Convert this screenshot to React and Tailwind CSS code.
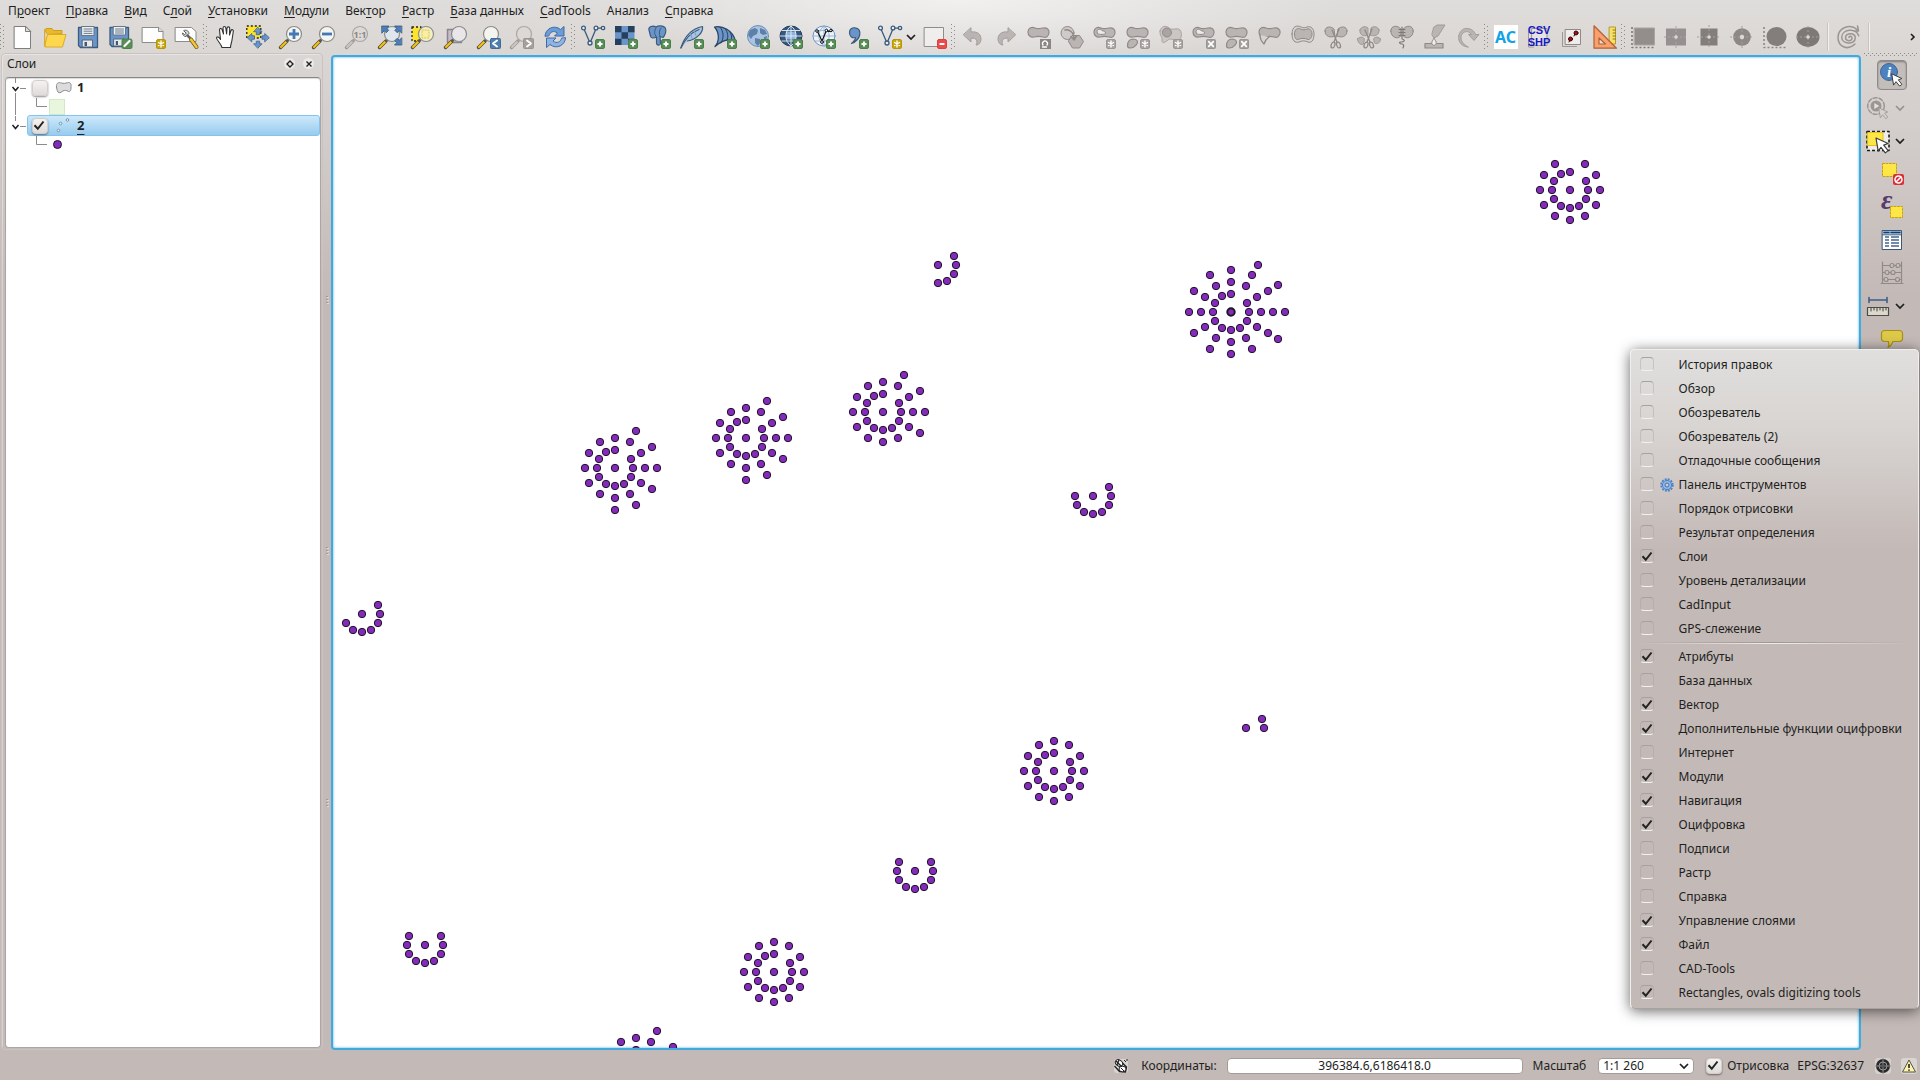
import React from "react";

const FONT = "font-['Noto_Sans','Open_Sans',sans-serif]";

/* ---------- shared icon pieces ---------- */

const BLUE = "#6b95c8";
const NAVY = "#3b5b7d";
const GREY = "#bab5b3";
const GLINE = "#8f8a88";

function Svg({ children, size = 24 }) {
  return (
    <svg width={size} height={size} viewBox="0 0 24 24" fill="none" strokeLinecap="round" strokeLinejoin="round" aria-hidden="true" className="block shrink-0 overflow-visible">
      {children}
    </svg>
  );
}

const PlusBadge = () => (
  <g>
    <rect x="14.5" y="14.5" width="9" height="9" rx="1.5" fill="#588f56" stroke="#4b7f4a" />
    <path d="M19 16.5v5M16.5 19h5" stroke="#fff" strokeWidth="2" strokeLinecap="butt" />
  </g>
);
const StarBadge = ({ x = 14.5, grey }) => (
  <g transform={`translate(${x} 14.5)`}>
    <rect width="9" height="9" rx="1.5" fill={grey ? "#aaa5a3" : "#c9a50c"} stroke={grey ? "#9b9694" : "#b8960a"} />
    <path d="M4.5 1.5v6M2 3l5 3M7 3l-5 3" stroke="#fff" strokeWidth="1.4" />
  </g>
);
const CrossBadge = () => (
  <g>
    <rect x="14.5" y="14.5" width="9" height="9" rx="1" fill="#a5a09e" stroke="#999492" />
    <path d="M16.7 16.7l4.6 4.6M21.3 16.7l-4.6 4.6" stroke="#fff" strokeWidth="1.7" />
  </g>
);
const Lens = ({ grey, cx = 15, fill = "#f4f4f1" }) => (
  <g>
    <path d="M1.5 22.5l6.5-6.5" stroke={grey ? "#9d9896" : "#5a5136"} strokeWidth="3.4" />
    <path d="M2 22l5-5" stroke={grey ? "#cbc6c3" : "#f8c40e"} strokeWidth="2" />
    <path d="M8 16l2.5-2.5" stroke={grey ? "#a5a09e" : "#555753"} strokeWidth="2" />
    <circle cx={cx} cy="9" r="7.5" fill={grey ? "#dcd8d5" : fill} stroke={grey ? "#aba6a3" : "#8b8d89"} strokeWidth="1.2" />
  </g>
);
const VLine = () => (
  <g stroke={NAVY} strokeWidth="1.3">
    <path d="M3.2 4.5L9 18l5.5-13M16.5 3.2h5" />
    <g fill="#e4ebf2">
      <circle cx="2.5" cy="3" r="1.9" />
      <circle cx="9" cy="18" r="2" />
      <circle cx="15" cy="3" r="1.9" />
      <circle cx="22" cy="3" r="1.7" />
    </g>
  </g>
);
const Bean = ({ d = "M1 7c0-4 3.500-5.500 7-4 3 1.300 5 .5 8 0 4-.6 6.500 1.500 6 5s-3 5-6 4c-3-.9-6-.8-9 0-3.500.7-6-1.500-6-5z", fill = GREY }) => (
  <path d={d} fill={fill} stroke={GLINE} strokeWidth="1.2" />
);
const SmallBean = () => <path d="M1.500 21c0-4 2-7 6-7 4 .2 5 3 3 5.500-2 2-2.500 3.500-6 3.500-2 0-3-.5-3-2z" fill={GREY} stroke={GLINE} strokeWidth="1.2" />;
const Scissors = () => (
  <g stroke={GLINE} strokeWidth="1.3">
    <path d="M8 5l5 12M15 4l-5 13" />
    <ellipse cx="9" cy="20" rx="1.800" ry="3" transform="rotate(20 9 20)" />
    <ellipse cx="14.500" cy="20" rx="1.800" ry="3" transform="rotate(-20 14.500 20)" />
  </g>
);
const Arrow = ({ grey, s = 1, x = 12, y = 10 }) => (
  <path transform={`translate(${x} ${y}) scale(${s})`} d="M0 0l11 5-4 1.500 4 5-2.500 2-4-5-2.500 3.500z" fill={grey ? "#d6d1ce" : "#fff"} stroke={grey ? "#a19c9a" : "#3c3c3c"} strokeWidth="1.1" />
);

/* ---------- toolbar icons ---------- */

const icons = {
  new: <Svg><path d="M4.500 1.500h11l5 5v17h-16z" fill="#fefefe" stroke="#7d7f7c" /><path d="M15.500 1.500v5h5z" fill="#ddd" stroke="#7d7f7c" /></Svg>,
  open: <Svg><path d="M2 5.500l1-2h6l1.500 2h8.500v3l-14 1z" fill="#e8b92e" stroke="#cf9f1c" /><path d="M1.500 5v16.500l3-12h18.500l-3.500 12.500h-17z" fill="#fdd84e" stroke="#dcab27" /></Svg>,
  save: <Svg><path d="M2.500 2.500h19v20h-17l-2-2z" fill={BLUE} stroke={NAVY} strokeWidth="1.3" /><path d="M6 1.500h12v9H6z" fill="#eef0f1" stroke="#64778b" /><path d="M8 4h8M8 6.200h8M8 8.400h8" stroke="#6b7b8c" /><path d="M6.500 15h10v7h-10z" fill="#e9e9e6" stroke="#55697f" /><path d="M8.500 17v4h2.500v-4z" fill={NAVY} /></Svg>,
  saveAs: <Svg><path d="M1 2.500h18.500v19h-16.500l-2-2z" fill={BLUE} stroke={NAVY} strokeWidth="1.3" /><path d="M4.500 1.500h12v8.500h-12z" fill="#eef0f1" stroke="#64778b" /><path d="M6.500 4h8M6.500 6h8M6.500 8h8" stroke="#6b7b8c" /><path d="M5 14h9v7H5z" fill="#e9e9e6" stroke="#55697f" /><path d="M6.800 16v4H9v-4z" fill={NAVY} /><rect x="13" y="14" width="10" height="9.500" rx="1.500" fill="#588f56" stroke="#4b7f4a" /><path d="M15.500 21l5-5" stroke="#fff" strokeWidth="2.200" /></Svg>,
  newPrint: <Svg><path d="M.5 2.500h16l4.500 4v11h-20.500z" fill="#fefefe" stroke="#8b8d89" /><path d="M16.500 2.500v4h4.500" fill="#ddd" stroke="#8b8d89" /><StarBadge /></Svg>,
  layoutMgr: <Svg><path d="M.5 2.500h16l4.500 4v10h-20.500z" fill="#fefefe" stroke="#8b8d89" /><path d="M9 5.500c2-1 4.500 0 5 3l-3 3c-2 0-3.500-1.500-3.500-3.500l2 1.500 1.500-1z" fill="#dadada" stroke="#5c5c5c" /><path d="M12.500 10.500l3 3" stroke="#666" strokeWidth="2.500" /><path d="M16 14.500l5.500 7.500" stroke="#6f5c20" strokeWidth="4" /><path d="M16 14.500l5.500 7.500" stroke="#f2c634" strokeWidth="2.500" /></Svg>,
  pan: <Svg><path transform="translate(2 0)" d="M7 22.500c-1-4-5-7-5.500-9.500.5-2 2.500-1 4 1.500L4.500 5c0-2.200 2.300-2 2.700 0L8.500 9 8 3c.2-2 2.600-2 2.800 0l.8 6L12 3.200c.4-1.900 2.600-1.700 2.700.2L14.500 10l1.500-4.500c.7-1.500 2.600-.8 2.300 1L17 15c-.5 3-1.500 5-1.500 7.500z" fill="#fff" stroke="#333" strokeWidth="1.1" /></Svg>,
  panSel: <Svg><path d="M.8 1h14v12H.8z" fill="#fde32d" stroke="#222" strokeWidth="1.300" strokeDasharray="2 2" strokeLinecap="butt" /><g fill={BLUE} stroke="#416a9b" strokeWidth=".9"><path d="M12 2.500l4 4.200h-2.300v3h-3.400v-3H8zM12 23l4-4.200h-2.300v-2.600h-3.400v2.600H8zM1.500 12.500l4.300-4v2.300h2.700v3.400H5.800v2.300zM23 12.500l-4.300-4v2.300H16v3.400h2.700v2.300z" /></g></Svg>,
  zoomIn: <Svg><Lens cx="15" /><path d="M15 4v10M10 9h10" stroke="#4577b3" strokeWidth="2.800" strokeLinecap="butt" /></Svg>,
  zoomOut: <Svg><Lens cx="15" /><path d="M10 9h10" stroke="#4577b3" strokeWidth="2.800" strokeLinecap="butt" /></Svg>,
  zoom1: <Svg><Lens grey cx="15" /><text x="15" y="12.500" textAnchor="middle" fontSize="9" fontWeight="700" fontFamily="Noto Sans" fill="#8b8684">1:1</text></Svg>,
  zoomFull: <Svg><Lens cx="14" fill="#dfe6ec" /><g fill="#4f7fba" stroke="#33567f" strokeWidth=".8"><path d="M4 1h7L8.700 3.300l2 2-2.400 2.400-2-2L4 8zM23.500 1h-7l2.300 2.300-2 2 2.400 2.400 2-2 2.300 2.300zM23.500 20h-7l2.300-2.300-2-2 2.400-2.400 2 2 2.300-2.300z" /></g></Svg>,
  zoomSel: <Svg><path d="M1 2h9v14H1z" fill="#fde32d" stroke="#222" strokeDasharray="2 2" strokeWidth="1.300" strokeLinecap="butt" /><Lens cx="15" fill="#f3efc4" /><path d="M11 5h7v8h-7z" stroke="#d8c75c" strokeDasharray="1.500 1.500" fill="#f8f0a0" /></Svg>,
  zoomLayer: <Svg><path d="M3.500 4.500h14v13h-14z" fill="#c5bcc8" stroke="#8c8490" strokeWidth="1.500" /><Lens cx="15" fill="#e8e6e8" /></Svg>,
  zoomLast: <Svg><Lens cx="14" /><rect x="13.500" y="13.500" width="10" height="10" rx="1" fill="#4f7fae" stroke="#416a95" /><path d="M20 15.500l-4 3 4 3" stroke="#fff" strokeWidth="2" /></Svg>,
  zoomNext: <Svg><Lens grey cx="14" /><rect x="13.500" y="13.500" width="10" height="10" rx="1" fill="#a5a09e" stroke="#999492" /><path d="M17 15.500l4 3-4 3" stroke="#fff" strokeWidth="1.800" /></Svg>,
  refresh: <Svg><path d="M2 11C2 4 11-1 17.500 4.500L21 1.500V11h-9.500l3-3c-4-3-7.500-1-8.500 2.500z" fill="#6b9bd8" stroke="#3f6ba5" /><path d="M22.500 13c0 7-9 12-15.500 6.500L3.500 22.500V13H13l-3 3c4 3 7.500 1 8.500-2.500z" fill="#8fb4e3" stroke="#3f6ba5" /></Svg>,

  addVector: <Svg><VLine /><PlusBadge /></Svg>,
  addRaster: <Svg><path d="M1 1h19.500v19H1z" fill={BLUE} /><path d="M1 1h6.500v6.300H1zM14 1h6.500v6.300H14zM7.500 7.300H14v6.400H7.500zM1 13.700h6.500V20H1zM14 13.700h6.500V20H14z" fill="#263f5c" /><PlusBadge /></Svg>,
  addPg: <Svg><path d="M2 5C1 1.500 6 0 9 2c3-2 7-1 9 .5 2 3 0 8-2 10l-3-1 .5 7c-.5 2.500-4 2-4-.5L9.500 12c-3 1.500-5.500 1.500-6-1z" fill={BLUE} stroke={NAVY} strokeWidth="1.200" /><path d="M9 3c-2 3-2 6 .5 9M14 3c-2 2-2 6-1 8.500" stroke={NAVY} /><PlusBadge /></Svg>,
  addSpatialite: <Svg><path d="M.8 23C4 13 10 4 22.500 1.500c1 6-6 13-15 14.500" fill="#a9c4e2" stroke={NAVY} strokeWidth="1.200" /><path d="M1 23C5 14 11 7.500 19 4.500" stroke={NAVY} strokeWidth="1.100" /><path d="M10 8l2 5M14 5.500l2 5" stroke="#7e9dc0" /><PlusBadge /></Svg>,
  addMssql: <Svg><path d="M1.500 2c8-1.500 18 3 21 14-6-3-14 0-20.500 5.500C7 16 6 7 1.500 2z" fill={BLUE} stroke="#27425f" strokeWidth="1.200" /><path d="M7 2c4 5 4 11 1 16M12 3.500c3 4 3.500 8 2 12M17 7c1.500 2.500 2 5 1.500 8" stroke="#27425f" /><PlusBadge /></Svg>,
  addWms: <Svg><circle cx="12" cy="11" r="10.500" fill="#a9c3e0" stroke="#6b8fb8" /><path d="M4 5l5-2 3 2-1 4-4 2-2 3-3-4zM14 3l5 2 2 4-4 1-3-2zM9 13l5 1 1 3-3 4-3-3zM18 12l3-1-1 5-2 1z" fill="#5c80aa" /><PlusBadge /></Svg>,
  addWcs: <Svg><ellipse cx="12" cy="11" rx="11" ry="10" fill="#34587f" stroke="#223a56" /><path d="M7 6.500h10v8H7z" fill="#8fb4dd" /><path d="M1 11h22M12 1v20M3 5.500h18M3 16h18M12 1C5 6 5 16 12 21M12 1c7 5 7 15 0 20" stroke="#e8eff6" strokeWidth=".9" /><PlusBadge /></Svg>,
  addWfs: <Svg><ellipse cx="12" cy="11" rx="11" ry="10" fill="#eef2f6" stroke="#6b95c8" /><path d="M1 11h22M12 1v20M3 5.500h18M3 16h18M12 1C5 6 5 16 12 21M12 1c7 5 7 15 0 20" stroke="#8fb0d4" strokeWidth=".9" /><path d="M5.500 6.500L10 16l4-9.500h5" stroke="#111" strokeWidth="1.200" /><g fill="#fff" stroke="#111"><circle cx="5" cy="6" r="1.300" /><circle cx="10" cy="17" r="1.400" /><circle cx="14.500" cy="5.500" r="1.300" /><circle cx="19" cy="5.500" r="1.300" /></g><PlusBadge /></Svg>,
  addCsv: <Svg><path d="M4.500 7.500c0-3.500 2.500-5 5.500-4.700 4 .3 5.500 3.500 4.700 7.200-.8 4-3.200 6.500-8.200 8.500 3-2.500 4-4 4-6-3.500 1-6-1.500-6-5z" fill={BLUE} stroke={NAVY} strokeWidth="1.200" /><PlusBadge /></Svg>,
  newVector: <Svg><VLine /><StarBadge /></Svg>,
  removeLayer: <Svg><path d="M1.500 2.500h19v19h-19z" fill="#efeeed" stroke="#8f8d8b" /><rect x="14.500" y="14.500" width="9" height="9" rx="1.500" fill="#ef4a4a" stroke="#df3f3f" /><path d="M16.500 19h5" stroke="#fff" strokeWidth="2" strokeLinecap="butt" /></Svg>,

  undo: <Svg><path d="M10 3v4c7-1 10 3 10 7 0 3-2 6-5 6 2-4 1-7-5-7v4L2.500 10z" fill={GREY} stroke="#a39e9b" /></Svg>,
  redo: <Svg><path d="M14 3v4c-7-1-10 3-10 7 0 3 2 6 5 6-2-4-1-7 5-7v4l7.500-7z" fill={GREY} stroke="#a39e9b" /></Svg>,
  rotate: <Svg><Bean /><path d="M13 14h11v10H13z" fill="#8b8684" /><path d="M16 20a2.500 2.500 0 1 1 4 0M15.500 22h4" stroke="#fff" strokeWidth="1.300" /></Svg>,
  simplify: <Svg><circle cx="7.500" cy="8" r="6.500" fill="#cfcac7" stroke={GLINE} /><path d="M12.500 10.500h7l4 6-4 6.500h-7l-4-6.500z" fill={GREY} stroke={GLINE} /><path d="M5 5c4-1 9 2 9 9m-3-2.500l3 3.500 2.500-4" stroke={GLINE} strokeWidth="1.500" /></Svg>,
  addRing: <Svg><Bean /><path d="M4 6.500C4 4 7.500 3.500 9 5.500c2 1 3.500.5 3.500 2.500S6 9.500 5 9z" fill="#eceae8" stroke={GLINE} /><StarBadge grey x={13.500} /></Svg>,
  addPart: <Svg><Bean /><SmallBean /><StarBadge grey x={14.500} /></Svg>,
  fillRing: <Svg><path d="M1 6c1-5 6-6 9-3s8-1 11 2c3 4 1 11-3 10-4 0-7-2-9 0s-6 4-6 1 0-3-1-5c-1-1-1-3-1-5z" fill="#cbc6c3" stroke="#aaa5a3" /><circle cx="8" cy="7.500" r="4.500" fill="#aaa5a3" stroke={GLINE} /><StarBadge grey x={14.500} /></Svg>,
  delRing: <Svg><Bean /><path d="M4 6.500C4 4 7.500 3.500 9 5.500c2 1 3.500.5 3.500 2.500S6 9.500 5 9z" fill="#eceae8" stroke={GLINE} /><CrossBadge /></Svg>,
  delPart: <Svg><Bean /><SmallBean /><CrossBadge /></Svg>,
  reshape: <Svg><Bean /><path d="M2 10c0 3 1 6 4 9 1-3 2-5 5-7" stroke={GLINE} strokeWidth="1.300" fill="#d8d4d1" /></Svg>,
  offset: <Svg><path d="M1 9c0-8 5-9 9-7 2 1 4 1 6 0 4-1.500 7 2 7 7 0 7-3 9-6 8-3-1.500-6-1.500-9 0-4 1-7-1-7-8z" fill="#d8d4d1" stroke={GLINE} /><path d="M3.500 9c0-5 3-6.500 6-5 2 1 4.500 1 6.500 0 3-1 5 1.500 5 5s-2 6-4 5.500c-3-1.500-7-1.500-10 0-2 .5-3.500-1.500-3.500-5.500z" fill={GREY} stroke={GLINE} /></Svg>,
  split: <Svg><path d="M1 6c0-5 6-5 9-2l1 7c-4 2-10 1-10-5zM23 6c0-5-6-5-9-2l-1 7c4 2 10 1 10-5z" fill={GREY} stroke={GLINE} /><Scissors /></Svg>,
  splitParts: <Svg><path d="M3 5c1-4 6-4 8-2v7c-4 2-9 0-8-5zM22 5c-1-4-6-4-8-2l-1 7c4 2 10 0 9-5zM.5 14c2-2 5-3 7 0l-1 5c-3 2-6-2-6-5zM23.500 14c-2-2-5-3-7 0l1 4c3 2 6-1 6-4z" fill={GREY} stroke="#a09b99" /><Scissors /></Svg>,
  merge: <Svg><path d="M.8 6c0-6 7-6 10-2v7C7 15 .8 12 .8 6zM23.200 6c0-6-7-6-10-2v7c4 4 10 1 10-5z" fill={GREY} stroke={GLINE} /><path d="M9 4.500h6M9 7.500h6M9 10.500h6M12 2v12M12 14c4 1 2 3-1 3s-1 2 1 2 2 1.500 1 4" stroke="#7e7977" strokeWidth="1.200" /></Svg>,
  rotSymbol: <Svg><path d="M11 2l3-2h8l-7 11-4 2-2-3z" fill={GREY} stroke="#a09b99" /><path d="M2 18.500h18v4.500H2z" fill={GREY} stroke={GLINE} strokeWidth="1.200" /><path d="M11 13.500c-3 3.500-3 6 0 7 3-1 3-3.500 0-7z" fill="#efedec" stroke={GLINE} /></Svg>,
  rotArrow: <Svg><path d="M12 22C-2 21 1 2 12 3.500c4 .5 6.500 3 7.500 6H23l-5 6-5.500-6h3C12 4 4.500 7 5 13c.3 4 3 6.500 7 9z" fill={GREY} stroke="#a39e9b" /></Svg>,

  ac: <span className="flex h-6 w-6 items-center justify-center bg-white text-base font-bold leading-none text-[#12a3e6]">AC</span>,
  csv: <Svg><path d="M1.500 7v15h5M5 3.500h15v17H5z" stroke="#9a9795" fill="#e6e3e1" /><g fontSize="11" fontWeight="600" fontFamily="Liberation Sans, sans-serif" fill="#1818c4" textAnchor="middle"><text x="12" y="9">CSV</text><text x="12" y="21">SHP</text></g></Svg>,
  points: <Svg><path d="M2.500 7.500v14h14" stroke="#9a9795" /><path d="M5.500 4.500h15v15h-15z" fill="#efedeb" stroke="#8d8a88" /><path d="M9 17l2-4M14 11l2-4" stroke="#111" /><circle cx="10.500" cy="14" r="2" fill="#a01018" stroke="#400" /><circle cx="16" cy="8" r="2" fill="#a01018" stroke="#400" /></Svg>,
  cad: <Svg><path d="M16.500 2h6v17h-6z" fill="#f7e06a" stroke="#b59a25" /><path d="M20 5h2.500M20 8h2.500M20 11h2.500M20 14h2.500" stroke="#8d7719" /><path d="M1 .8V23.200H23.500z" fill="#f9a06c" stroke="#b06236" strokeWidth="1.200" /><path d="M6 13v6h6.500z" fill="#e3ddda" stroke="#b06236" strokeWidth="1.200" /></Svg>,
  rectExt: <Svg><path d="M3.500 3h20v17h-20z" fill="#938e8c" stroke="#a9a4a2" /><path d="M1 2v20.500h22" stroke="#7d7876" strokeWidth="1.600" strokeDasharray="2 2" strokeLinecap="butt" /></Svg>,
  rectCtr: <Svg><path d="M2 3.500h20v17H2z" fill="#969190" /><path d="M0 12h24M12 1v22" stroke="#aaa5a3" strokeDasharray="2 2" strokeLinecap="butt" /><circle cx="12" cy="12" r="1.800" fill="#dcd8d5" /></Svg>,
  square: <Svg><path d="M3.500 3.500h17v17h-17z" fill="#837e7c" /><path d="M0 12h24M12 0v24" stroke="#a5a09e" strokeDasharray="2 2" strokeLinecap="butt" /><circle cx="12" cy="12" r="1.800" fill="#dcd8d5" /></Svg>,
  circle: <Svg><circle cx="12" cy="12" r="8.800" fill="#8d8886" /><path d="M0 12h24M12 1v22" stroke="#a5a09e" strokeDasharray="2 2" strokeLinecap="butt" /><circle cx="12" cy="12" r="2.200" fill="#dcd8d5" /></Svg>,
  ovalExt: <Svg><ellipse cx="13.500" cy="11.500" rx="10" ry="9.500" fill="#837e7c" /><path d="M1 2v20.500h22" stroke="#8d8886" strokeWidth="1.600" strokeDasharray="2 2" strokeLinecap="butt" /></Svg>,
  oval: <Svg><ellipse cx="12" cy="12" rx="11.500" ry="10" fill="#7e7977" /><path d="M0 12h24M12 1v22" stroke="#a5a09e" strokeDasharray="2 2" strokeLinecap="butt" /><circle cx="12" cy="12" r="1.800" fill="#dcd8d5" /></Svg>,
  spiral: <Svg><path d="M12 12.500c0-2 3-1.500 3 .7 0 3.300-6.500 3.500-6.500-.7 0-5 9.800-5.200 9.800.5 0 7-13.600 6.700-13.600-.7 0-8 14-10 17-1.500M18 19C10 26.500 1 21 1 12.500 1 3 13-2 20 4.500M20.500 1l1 5-5 0" stroke="#9b9694" strokeWidth="1.500" /></Svg>,

  identify: <Svg><circle cx="9" cy="9" r="8.500" fill="#4d82bf" stroke="#3a679c" /><text x="9" y="14" textAnchor="middle" fontSize="15" fontWeight="700" fontStyle="italic" fontFamily="Liberation Serif, serif" fill="#fff">i</text><Arrow x={12} y={11} s={0.9} /></Svg>,
  action: <Svg><circle cx="10" cy="10" r="8.300" fill="#d6d1ce" stroke="#9b9694" strokeWidth="1.500" strokeDasharray="4 2" /><circle cx="10" cy="10" r="5.500" fill="#9b9694" /><path d="M8.300 7l5 3-5 3z" fill="#e4e1de" /><Arrow grey x={13} y={12} s={0.8} /></Svg>,
  select: <Svg><path d="M1 2.500h22v19H1z" stroke="#1c1c1c" strokeWidth="1.600" strokeDasharray="3 2" strokeLinecap="butt" fill="#efedea" /><path d="M2 3.500h15v13H2z" fill="#fde645" stroke="#e0c31a" /><Arrow x={10} y={9} s={1.1} /></Svg>,
  deselect: <Svg><path d="M2.500 1.500h14v13h-14z" fill="#fde645" stroke="#c6a312" strokeDasharray="2 1.500" /><rect x="13" y="12" width="11" height="11" rx="2" fill="#dc2f35" /><circle cx="18.500" cy="17.500" r="3.500" fill="#dc2f35" stroke="#fff" strokeWidth="1.500" /><path d="M16 20l5-5" stroke="#fff" strokeWidth="1.500" /></Svg>,
  expr: <Svg><text x="1" y="14" fontSize="28" fontWeight="700" fontStyle="italic" fontFamily="Liberation Serif, serif" fill="#573b69">ε</text><path d="M10.500 11.500h12v11h-12z" fill="#fde645" stroke="#c6a312" strokeDasharray="2 1.500" /></Svg>,
  table: <Svg><path d="M2.500 2.500h19v19h-19z" fill="#fff" stroke="#37587b" /><path d="M3 3h18v3H3z" fill="#9cc3ea" /><path d="M4 4.500h5M11 4.500h9" stroke="#1f3c5c" strokeWidth="1.300" /><path d="M5 9h4M11 9h8M5 12h4M11 12h8M5 15h4M11 15h8M5 18h4M11 18h8" stroke="#44658a" strokeWidth="1.500" strokeLinecap="butt" /><path d="M2.500 6.800h19" stroke="#37587b" /></Svg>,
  abacus: <Svg><g stroke="#8f8a88" strokeWidth="1.200"><path d="M2.500 1v21M21.500 1v21M1 22.500h22M2.500 4.500h19M2.500 11.500h19M2.500 18.500h19" /><g fill="#c8c1be"><circle cx="12" cy="4.500" r="2" /><circle cx="18" cy="4.500" r="2" /><circle cx="7" cy="11.500" r="2" /><circle cx="13" cy="11.500" r="2" /><circle cx="6" cy="18.500" r="2" /><circle cx="17.500" cy="18.500" r="2" /></g></g></Svg>,
  measure: <Svg><path d="M3 6h18M3 3.500v5M21 3.500v5" stroke="#3c5f85" strokeWidth="1.600" /><path d="M1.500 13.500h21v8h-21z" fill="#dcd9cc" stroke="#4d4d47" strokeWidth="1.200" /><path d="M5 14v3M8 14v2M11 14v3M14 14v2M17 14v3M20 14v2" stroke="#3c3c3c" /></Svg>,
  tip: <Svg><path d="M5 3.500h14c2 0 3.500 1 3.500 3v5c0 2-1.500 3-3.500 3h-6c-1 3-2 4.500-5 6 1-2 1-4 .5-6H5c-2 0-3.500-1-3.500-3v-5c0-2 1.500-3 3.500-3z" fill="#dcc94a" stroke="#a98f12" strokeWidth="1.200" /></Svg>,
};

function Chevron({ muted }) {
  return (
    <svg width="10" height="10" viewBox="0 0 10 10" fill="none" aria-hidden="true" className="block shrink-0">
      <path d="M1 3l4 4 4-4" stroke={muted ? "#98918e" : "#1e1e1e"} strokeWidth="1.700" />
    </svg>
  );
}

function Handle() {
  return (
    <svg width="5" height="26" viewBox="0 0 5 26" aria-hidden="true" className="block shrink-0">
      {[0, 1, 2, 3, 4, 5, 6].map((i) => (
        <g key={i} fill="#8e8a88">
          <rect x="0" y={i * 4} width="1" height="1" />
          <rect x="3" y={i * 4 + 2} width="1" height="1" />
        </g>
      ))}
    </svg>
  );
}

function Tool({ id, label }) {
  return (
    <button type="button" aria-label={label} className="flex h-7 w-[33px] shrink-0 items-center justify-center">
      {icons[id]}
    </button>
  );
}

const fileTools = [["new", "Создать"], ["open", "Открыть"], ["save", "Сохранить"], ["saveAs", "Сохранить как"], ["newPrint", "Новый макет"], ["layoutMgr", "Управление макетами"]];
const navTools = [["pan", "Прокрутка"], ["panSel", "Центрировать выделение"], ["zoomIn", "Увеличить"], ["zoomOut", "Уменьшить"], ["zoom1", "Фактический размер"], ["zoomFull", "Полный охват"], ["zoomSel", "Увеличить до выделенного"], ["zoomLayer", "Увеличить до слоя"], ["zoomLast", "Предыдущий охват"], ["zoomNext", "Следующий охват"], ["refresh", "Обновить"]];
const layerTools = [["addVector", "Векторный слой"], ["addRaster", "Растровый слой"], ["addPg", "PostGIS"], ["addSpatialite", "SpatiaLite"], ["addMssql", "MSSQL"], ["addWms", "WMS"], ["addWcs", "WCS"], ["addWfs", "WFS"], ["addCsv", "Текст с разделителями"], ["newVector", "Создать слой"]];
const editTools = [["undo", "Отменить"], ["redo", "Повторить"], ["rotate", "Повернуть"], ["simplify", "Упростить"], ["addRing", "Добавить кольцо"], ["addPart", "Добавить часть"], ["fillRing", "Заполнить кольцо"], ["delRing", "Удалить кольцо"], ["delPart", "Удалить часть"], ["reshape", "Корректировать"], ["offset", "Параллельная кривая"], ["split", "Разбить объекты"], ["splitParts", "Разбить части"], ["merge", "Объединить"], ["rotSymbol", "Объединить атрибуты"], ["rotArrow", "Повернуть значки"]];
const pluginTools = [["ac", "AC"], ["csv", "CSV SHP"], ["points", "Точки"], ["cad", "CAD"]];
const shapeTools = [["rectExt", "Прямоугольник"], ["rectCtr", "Прямоугольник из центра"], ["square", "Квадрат"], ["circle", "Круг"], ["ovalExt", "Овал"], ["oval", "Овал из центра"]];

const group = (list) => list.map(([id, label]) => <Tool key={id} id={id} label={label} />);
const Rule = () => <span className="mx-[3px] h-7 w-0.5 shrink-0 border-r border-[#f3f1f0] bg-[#c9c4c1]" />;

/* ---------- menu bar ---------- */

const menus = [["П", "р", "оект"], ["", "П", "равка"], ["", "В", "ид"], ["С", "л", "ой"], ["", "У", "становки"], ["", "М", "одули"], ["Век", "т", "ор"], ["", "Р", "астр"], ["", "Б", "аза данных"], ["", "C", "adTools"], ["Анализ", "", ""], ["", "С", "правка"]];

function MenuBar() {
  return (
    <nav className="flex h-[22px] shrink-0 items-center gap-4 pl-2">
      {menus.map(([a, b, c]) => (
        <button key={a + b + c} type="button" className="whitespace-nowrap">
          {a}
          <span className="underline underline-offset-2">{b}</span>
          {c}
        </button>
      ))}
    </nav>
  );
}

function Toolbar() {
  return (
    <div className="flex h-[30px] shrink-0 items-center">
      <Handle />
      {group(fileTools)}
      <Handle />
      {group(navTools)}
      <Handle />
      {group(layerTools)}
      <button type="button" aria-label="Другие слои" className="flex h-7 w-3 shrink-0 items-center">
        <Chevron />
      </button>
      <Tool id="removeLayer" label="Удалить слой" />
      <Handle />
      {group(editTools)}
      <Handle />
      {group(pluginTools)}
      <Handle />
      {group(shapeTools)}
      <Rule />
      <Tool id="spiral" label="Спираль" />
      <Rule />
      <button type="button" aria-label="Ещё" className="ml-auto mr-1 flex h-7 items-center">
        <svg width="6" height="8" viewBox="0 0 6 8" fill="none" aria-hidden="true">
          <path d="M1 1l3 3-3 3" stroke="#1e1e1e" strokeWidth="1.600" />
        </svg>
      </button>
    </div>
  );
}

/* ---------- check box ---------- */

function Check({ flat, ...rest }) {
  return (
    <span className="relative block h-4 w-4 shrink-0">
      <input
        type="checkbox"
        className={
          flat
            ? "peer block h-[14px] w-[14px] appearance-none rounded-[4px] border border-[#a59e9b66] border-b-[#f3f1f0] border-t-[#a8a19e]"
            : "peer block h-4 w-4 appearance-none rounded-[4px] border border-[#d2cecb] bg-gradient-to-b from-[#f4f3f2] to-[#dfdcda] shadow-[0_1px_2px_rgba(0,0,0,0.45)]"
        }
        {...rest}
      />
      <svg viewBox="0 0 14 14" width="14" height="14" fill="none" aria-hidden="true" className="pointer-events-none absolute left-0 top-0 hidden peer-checked:block">
        <path d="M2.500 7.200l3.300 3.600L11.500 3.500" stroke="#222" strokeWidth="2" />
      </svg>
    </span>
  );
}

/* ---------- layer panel ---------- */

function Elbow() {
  return (
    <svg width="13" height="17" viewBox="0 0 13 17" fill="none" aria-hidden="true" className="block shrink-0">
      <path d="M.5 0v8.500H11" stroke="#8b8b8b" />
    </svg>
  );
}

function Branch({ last }) {
  return (
    <svg width="21" height="20" viewBox="0 0 21 20" fill="none" aria-hidden="true" className="block shrink-0">
      <path d={last ? "M9.500 0v5M14 10.500h6" : "M9.500 0v5M14 10.500h6M9.500 15v5"} stroke="#8b8b8b" />
      <path d="M6.500 9l3 3.500 3-3.500" stroke="#1e1e1e" strokeWidth="1.500" />
    </svg>
  );
}

function LayerPanel() {
  return (
    <aside className="ml-px flex w-[322px] shrink-0 flex-col rounded-[4px] border border-[#c9c4c1] pb-px pl-[3px] pr-px shadow-[inset_1px_1px_0_rgba(255,255,255,0.35)]">
      <header className="flex h-[23px] shrink-0 items-center justify-between pb-1 pl-0.5 pr-[7px]">
        <h2>Слои</h2>
        <span className="flex gap-2">
          <button type="button" aria-label="Открепить" className="flex h-[11px] w-[11px] items-center justify-center rounded-full bg-white/50">
            <svg width="8" height="8" viewBox="0 0 8 8" fill="none" aria-hidden="true"><path d="M4 1l3 3-3 3-3-3z" stroke="#222" strokeWidth="1.400" /></svg>
          </button>
          <button type="button" aria-label="Закрыть" className="flex h-[11px] w-[11px] items-center justify-center rounded-full bg-white/50">
            <svg width="8" height="8" viewBox="0 0 8 8" fill="none" aria-hidden="true"><path d="M1.500 1.500l5 5M6.500 1.500l-5 5" stroke="#222" strokeWidth="1.400" /></svg>
          </button>
        </span>
      </header>
      <div className="min-h-0 flex-1 rounded-[4px] border border-[#aba6a3] border-t-[#8b8785] bg-white text-[13px] font-bold shadow-[inset_0_1px_1px_rgba(0,0,0,0.15)]">
        <div className="flex h-5 items-center">
          <Branch />
          <label className="flex h-5 items-center pl-[5px]">
            <Check aria-label="1" />
            <svg width="18" height="14" viewBox="0 0 18 14" fill="none" aria-hidden="true" className="ml-[7px] mr-1 block">
              <path d="M1.500 6c-.5-4 2-5 5-4 2 .8 4 .2 6-.3 3-.7 4 1.300 3.500 4 .2 4-1 5.500-3 4.500-1.500-1-3-1-5-.3-1.500.8-2.500 2.300-4 1.800S2 9 1.500 6z" fill="#dcdcdc" stroke="#8c8c8c" />
            </svg>
            1
          </label>
        </div>
        <div className="flex h-[17px] items-center">
          <svg width="30" height="17" viewBox="0 0 30 17" fill="none" aria-hidden="true" className="block shrink-0"><path d="M9.500 0v17" stroke="#8b8b8b" /></svg>
          <Elbow />
          <span className="h-4 w-4 border border-[#d3e8c6] bg-[#e8f6de]" />
        </div>
        <div className="flex h-[21px] items-center">
          <Branch last />
          <label className="flex h-[21px] flex-1 items-center rounded-[3px] border border-[#85c3ec] bg-gradient-to-b from-[#cde9fb] to-[#97cbee] pl-1">
            <Check aria-label="2" defaultChecked />
            <svg width="18" height="18" viewBox="0 0 18 18" fill="none" aria-hidden="true" className="ml-[7px] mr-1 block">
              <g stroke="#6f8ba0" fill="#e9f3fa" strokeWidth=".9"><circle cx="3.500" cy="13.500" r="1.300" /><circle cx="5.500" cy="6.500" r="1.300" /><circle cx="12.500" cy="3" r="1.300" /></g>
            </svg>
            <span className="underline underline-offset-4">2</span>
          </label>
        </div>
        <div className="flex h-[17px] items-center">
          <span className="w-[30px] shrink-0" />
          <Elbow />
          <span className="mx-1 h-[9px] w-[9px] rounded-full border border-[#1f1628] bg-[#852bbb]" />
        </div>
      </div>
    </aside>
  );
}

function Splitter() {
  return (
    <div className="flex w-2 shrink-0 flex-col items-center justify-evenly">
      {[0, 1, 2].map((i) => (
        <svg key={i} width="3" height="9" viewBox="0 0 3 9" aria-hidden="true">
          <path d="M1 0v1M1 3v1M1 6v1" stroke="#7f7a78" />
          <path d="M2 1v1M2 4v1M2 7v1" stroke="#fff" />
        </svg>
      ))}
    </div>
  );
}

/* ---------- map ---------- */

/* Offsets of the points on each ring, keyed by clock hour. */
const ring = (r) => {
  const a = Math.round(r * 0.5);
  const b = Math.round(r * 0.87);
  return { 1: [a, -b], 2: [b, -a], 3: [r, 0], 4: [b, a], 5: [a, b], 6: [0, r], 7: [-a, b], 8: [-b, a], 9: [-r, 0], 10: [-b, -a], 11: [-a, -b], 12: [0, -r] };
};
const all = [1, 2, 3, 4, 5, 6, 7, 8, 9, 10, 11, 12];
const noOne = [2, 3, 4, 5, 6, 7, 8, 9, 10, 11, 12];

const clusters = [
  { x: 898, y: 255, rings: { 18: noOne, 30: all, 42: all, 54: [1, 2, 3, 4] }, marked: true },
  { x: 1237, y: 133, rings: { 18: noOne, 30: noOne.slice(0, 10).concat(1) } },
  { x: 550, y: 355, rings: { 18: noOne, 30: all, 42: [1, 2, 3, 4] } },
  { x: 413, y: 381, rings: { 18: noOne, 30: all, 42: [1, 2, 3, 4, 5, 6] } },
  { x: 282, y: 411, rings: { 18: noOne, 30: all, 42: [1, 2, 3, 4, 5, 6] } },
  { x: 760, y: 439, rings: { 18: [2, 3, 4, 5, 6, 7, 8, 9] } },
  { x: 605, y: 208, rings: { 18: [2, 3, 4, 5, 6] } },
  { x: 29, y: 557, rings: { 18: [2, 3, 4, 5, 6, 7, 8] } },
  { x: 92, y: 888, rings: { 18: [2, 3, 4, 5, 6, 7, 8, 9, 10] } },
  { x: 441, y: 915, rings: { 18: noOne, 30: all } },
  { x: 303, y: 1011, rings: { 18: noOne, 30: all, 42: [1, 2, 3, 4, 5, 6] } },
  { x: 721, y: 714, rings: { 18: noOne, 30: all } },
  { x: 582, y: 814, rings: { 18: [2, 3, 4, 5, 6, 7, 8, 9, 10] } },
  { x: 913, y: 671, rings: { 18: [2, 3] } },
];

function MapCanvas() {
  return (
    <main className="relative mt-0.5 min-w-0 flex-1 overflow-hidden rounded-[4px] border-2 border-[#43a9dc] bg-white shadow-[inset_0_0_2px_1px_#a9dbf5]">
      <svg className="absolute inset-0 h-full w-full" aria-label="Карта">
        <g fill="#852bbb" stroke="#1d1426" strokeWidth="1">
          {clusters.map((c) => (
            <g key={c.x} transform={`translate(${c.x} ${c.y})`}>
              {Object.entries(c.rings).flatMap(([r, hours]) =>
                hours.map((h) => {
                  const [dx, dy] = ring(Number(r))[h];
                  return <circle key={r + "-" + h} cx={dx} cy={dy} r="3.700" />;
                })
              )}
              <circle r="3.700" strokeWidth={c.marked ? 2 : 1} />
            </g>
          ))}
        </g>
      </svg>
    </main>
  );
}

/* ---------- attribute tool column ---------- */

function SideTool({ id, label, drop, muted, pressed }) {
  return (
    <div className={drop ? "flex h-[33px] items-center gap-[5px] pl-0.5" : "flex h-[33px] items-center justify-center"}>
      <button
        type="button"
        aria-label={label}
        className={
          pressed
            ? "flex h-[30px] w-[30px] items-center justify-center rounded-[4px] border border-[#8f8a87] bg-[#c4bebb] shadow-[inset_0_1px_2px_rgba(0,0,0,0.35)]"
            : "flex h-7 items-center justify-center"
        }
      >
        {icons[id]}
      </button>
      {drop && (
        <button type="button" aria-label={label + ": меню"} className="flex h-7 items-center">
          <Chevron muted={muted} />
        </button>
      )}
    </div>
  );
}

function SideBar() {
  return (
    <div className="flex w-[59px] shrink-0 flex-col pl-[3px]">
      <svg width="54" height="4" viewBox="0 0 54 4" aria-hidden="true" className="mb-px block">
        {Array.from({ length: 14 }, (_, i) => (
          <g key={i} fill="#8e8a88"><rect x={i * 4} y="0" width="1" height="1" /><rect x={i * 4 + 2} y="2" width="1" height="1" /></g>
        ))}
      </svg>
      <SideTool id="identify" label="Определить объекты" pressed />
      <SideTool id="action" label="Выполнить действие" drop muted />
      <SideTool id="select" label="Выбрать объекты" drop />
      <SideTool id="deselect" label="Снять выделение" />
      <SideTool id="expr" label="Выбрать по выражению" />
      <SideTool id="table" label="Таблица атрибутов" />
      <SideTool id="abacus" label="Калькулятор полей" />
      <SideTool id="measure" label="Измерить" drop />
      <SideTool id="tip" label="Подсказки" />
    </div>
  );
}

/* ---------- status bar ---------- */

function StatusBar() {
  return (
    <footer className="flex h-[30px] shrink-0 items-center justify-end pr-[3px] pt-px">
      <button type="button" aria-label="Показать охват" className="mr-3 h-4 w-4">
        <svg width="16" height="16" viewBox="0 0 16 16" fill="none" aria-hidden="true">
          <rect x="1" y="1" width="14" height="14" rx="3" fill="#d9d5d3" />
          <ellipse cx="6" cy="5" rx="4" ry="3" transform="rotate(35 6 5)" fill="#fff" stroke="#222" />
          <path d="M3 3l7 7M6 2l-2 5M1.500 8l5 5.500 6 .5 1-5-4-4" stroke="#222" strokeWidth="1.300" />
          <ellipse cx="9.500" cy="11" rx="3.500" ry="2.800" fill="#fff" stroke="#222" />
          <path d="M8 10l3 3M11 2l2 2M14 1v2" stroke="#222" />
        </svg>
      </button>
      <label htmlFor="coords">Координаты:</label>
      <input id="coords" defaultValue="396384.6,6186418.0" className="ml-2.5 mr-2.5 h-4 w-[296px] rounded-[4px] border border-[#a39d9a] bg-white text-center leading-none" />
      <label htmlFor="scale">Масштаб</label>
      <span className="relative ml-3 block">
        <select id="scale" className="block h-4 w-[96px] appearance-none rounded-[4px] border border-[#a39d9a] bg-white pl-1 leading-none">
          <option>1:1 260</option>
        </select>
        <span className="pointer-events-none absolute right-[5px] top-[3px]"><Chevron /></span>
      </span>
      <label className="ml-3 flex items-center gap-[5px]"><Check defaultChecked />Отрисовка</label>
      <button type="button" className="ml-2">EPSG:32637</button>
      <button type="button" aria-label="Проекция" className="ml-[11px] h-4 w-4">
        <svg width="16" height="16" viewBox="0 0 16 16" fill="none" aria-hidden="true">
          <rect width="16" height="16" rx="3" fill="#d5d1ce" />
          <circle cx="8" cy="8" r="7" fill="#2a2a2a" /><circle cx="8" cy="8" r="4" stroke="#9a9a9a" /><path d="M8 0v16M0 8h16" stroke="#8b8b8b" /><circle cx="8" cy="8" r="2" fill="#555" />
        </svg>
      </button>
      <button type="button" aria-label="Сообщения" className="ml-2.5 h-4 w-4">
        <svg width="16" height="16" viewBox="0 0 16 16" fill="none" aria-hidden="true">
          <rect width="16" height="16" rx="3" fill="#d9d5d3" />
          <path d="M8 2l6.500 12h-13z" fill="#fbf4b0" stroke="#55543f" /><path d="M8 6v4M8 11.500v1.300" stroke="#111" strokeWidth="1.500" />
        </svg>
      </button>
    </footer>
  );
}

/* ---------- panels / toolbars pop-up ---------- */

const panels = [["История правок"], ["Обзор"], ["Обозреватель"], ["Обозреватель (2)"], ["Отладочные сообщения"], ["Панель инструментов", false, true], ["Порядок отрисовки"], ["Результат определения"], ["Слои", true], ["Уровень детализации"], ["CadInput"], ["GPS-слежение"]];
const toolbars = [["Атрибуты", true], ["База данных"], ["Вектор", true], ["Дополнительные функции оцифровки", true], ["Интернет"], ["Модули", true], ["Навигация", true], ["Оцифровка", true], ["Подписи"], ["Растр"], ["Справка"], ["Управление слоями", true], ["Файл", true], ["CAD-Tools"], ["Rectangles, ovals digitizing tools", true]];

function MenuRow({ text, checked, gear }) {
  return (
    <label className="flex h-6 items-center whitespace-nowrap pl-[9px] pr-4">
      <Check flat defaultChecked={checked} />
      <span className="flex w-[23px] shrink-0 justify-center">
        {gear && (
          <svg width="14" height="14" viewBox="0 0 14 14" fill="none" aria-hidden="true">
            <circle cx="7" cy="7" r="5.800" stroke="#4a80c4" strokeWidth="1.800" strokeDasharray="1.900 1.140" />
            <circle cx="7" cy="7" r="4.600" fill="#8fb6e8" stroke="#4a80c4" />
            <circle cx="7" cy="7" r="2" stroke="#3f72b3" fill="#d5ccc8" />
          </svg>
        )}
      </span>
      {text}
    </label>
  );
}

function PanelsMenu() {
  return (
    <div className="absolute right-px top-[349px] rounded-[5px] border border-[#f1efee] border-b-[#a9a29f] bg-[linear-gradient(#e0dfdd,#d8d4d2_80px,#c3b9b6_200px)] py-[3px] shadow-[0_2px_14px_rgba(0,0,0,0.6)]">
      {panels.map(([t, c, g]) => <MenuRow key={t} text={t} checked={c} gear={g} />)}
      <div role="separator" className="mx-2 my-px">
        <div className="h-px bg-gradient-to-r from-transparent via-[#9d9693] to-transparent" />
        <div className="h-px bg-gradient-to-r from-transparent via-[#efedeb] to-transparent" />
      </div>
      {toolbars.map(([t, c]) => <MenuRow key={t} text={t} checked={c} />)}
    </div>
  );
}

export default function App() {
  return (
    <div className={`relative flex h-screen w-full flex-col overflow-hidden bg-[#c3b9b6] bg-[radial-gradient(ellipse_380px_64px_at_50%_0,#f1f0ef,transparent),linear-gradient(#dfdddb,#d9d5d3_64px,#c3b9b6_300px)] text-xs text-[#221f1e] ${FONT}`}>
      <MenuBar />
      <Toolbar />
      <div className="flex min-h-0 flex-1 pt-px">
        <LayerPanel />
        <Splitter />
        <MapCanvas />
        <SideBar />
      </div>
      <StatusBar />
      <PanelsMenu />
    </div>
  );
}
